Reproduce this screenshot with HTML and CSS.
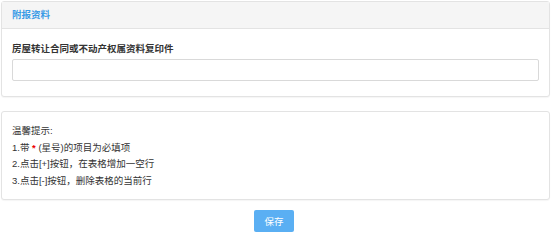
FILE: index.html
```html
<!DOCTYPE html>
<html lang="zh-CN">

<head>
    <meta charset="UTF-8">
    <meta name="viewport" content="width=device-width, initial-scale=1.0">
    <title>附报资料</title>
    <link rel="stylesheet" href="styles.css">
</head>

<body>
    <div class="page">
        <div class="panel">
            <div class="panel-heading">附报资料</div>
            <div class="panel-body">
                <div class="form-group">
                    <label for="fileCopy">房屋转让合同或不动产权属资料复印件</label>
                    <input type="text" id="fileCopy">
                </div>
            </div>
        </div>

        <div class="panel tips">
            <p>温馨提示:</p>
            <p>1.带 <span class="star">*</span> (星号)的项目为必填项</p>
            <p>2.点击[+]按钮，在表格增加一空行</p>
            <p>3.点击[-]按钮，删除表格的当前行</p>
        </div>

        <div class="actions">
            <button type="button" class="btn">保存</button>
        </div>
    </div>
</body>

</html>
```

FILE: styles.css
```css
body {
    font-family: 'Liberation Sans', 'Noto Sans CJK SC', sans-serif;
    font-size: 9.5px;
    margin: 0;
    padding: 0;
    background-color: #fff;
    color: #333;
}

.page {
    padding: 1px 4px 0 1px;
}

.panel {
    border: 1px solid #e3e3e3;
    border-radius: 3px;
    background-color: #fff;
    box-shadow: 0 1px 1px rgba(0, 0, 0, 0.04);
}

.panel-heading {
    background-color: #f5f5f5;
    border-bottom: 1px solid #e3e3e3;
    color: #3a9be6;
    font-weight: bold;
    height: 26px;
    line-height: 26px;
    padding: 0 10px;
}

.panel-body {
    padding: 13px 10px 15px;
}

.form-group label {
    display: block;
    font-weight: bold;
    line-height: 14px;
    margin-bottom: 3px;
}

.form-group input {
    display: block;
    box-sizing: border-box;
    width: 100%;
    height: 22px;
    border: 1px solid #d9d9d9;
    border-radius: 2px;
    padding: 0 6px;
}

.tips {
    margin-top: 14px;
    padding: 11px 10px 10px;
}

.tips p {
    margin: 0;
    line-height: 16.5px;
}

.star {
    color: #e00;
    font-weight: bold;
}

.actions {
    display: flex;
    justify-content: center;
    padding: 10px 0 0;
}

.btn {
    background-color: #5aaff3;
    color: #fff;
    border: none;
    border-radius: 2px;
    width: 40px;
    height: 22px;
    font-family: inherit;
    font-size: 9.5px;
    padding: 0;
    margin-left: -3px;
}
```
